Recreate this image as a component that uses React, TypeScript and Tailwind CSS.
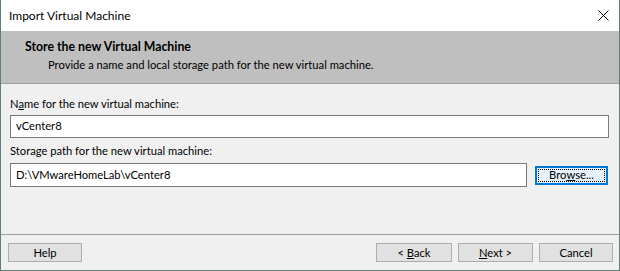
const font = { fontFamily: 'Lato, "Noto Sans", sans-serif' };

const DlgButton = ({ children, className = "" }: { children: React.ReactNode; className?: string }) => (
  <button
    className={
      "h-[19px] w-[74px] border border-[#adadad] bg-[#e1e1e1] text-[11.2px] leading-none text-black " +
      className
    }
  >
    {children}
  </button>
);

export default function App() {
  return (
    <div
      className="flex h-[271px] w-[620px] flex-col border-x border-b border-[#62807a] bg-[#f0f0f0] text-[11.2px] text-black"
      style={font}
    >
      {/* Title bar */}
      <div className="flex h-[31px] items-center justify-between bg-white pl-[8px] pr-[10px]">
        <span className="text-[12px]">Import Virtual Machine</span>
        <svg width="11" height="11" viewBox="0 0 11 11" className="mt-[-1px]">
          <path d="M0.5 0.5 L10.5 10.5 M10.5 0.5 L0.5 10.5" stroke="#000" strokeWidth="1" />
        </svg>
      </div>

      {/* Header */}
      <div className="flex h-[53px] flex-col border-b border-[#a0a0a0] bg-[#bfbfbf] pt-[8px]">
        <div className="pl-6 text-[12.3px] font-bold leading-4">Store the new Virtual Machine</div>
        <div className="mt-[2px] pl-[47px] leading-4">
          Provide a name and local storage path for the new virtual machine.
        </div>
      </div>

      {/* Body */}
      <div className="flex flex-1 flex-col pl-[9px] pr-[10px] pt-[12px]">
        <label className="leading-4">
          N<span className="underline">a</span>me for the new virtual machine:
        </label>
        <div className="mt-[3px] flex h-[23px] items-center border border-[#7a7a7a] bg-white px-[5px]">
          vCenter8
        </div>
        <label className="mt-[5px] leading-4">Storage path for the new virtual machine:</label>
        <div className="mt-[4px] flex items-center gap-2">
          <div className="flex h-[24px] flex-1 items-center border border-[#7a7a7a] bg-white px-[5px]">
            D:\VMwareHomeLab\vCenter8
          </div>
          <button className="mr-[1px] flex h-[19px] w-[73px] items-center justify-center border-2 border-[#0078d7] bg-[#e5f1fb] p-[1px] text-[11.2px]">
            <span className="flex h-full w-full items-center justify-center border border-dotted border-black">
              Bro<span className="underline">w</span>se...
            </span>
          </button>
        </div>
      </div>

      {/* Footer */}
      <div className="flex h-[36px] items-start justify-between border-t border-[#a0a0a0] pl-[7px] pr-[6px] pt-[8px]">
        <DlgButton>Help</DlgButton>
        <div className="flex gap-[6px]">
          <DlgButton className="w-[76px]">
            &lt; <span className="underline">B</span>ack
          </DlgButton>
          <DlgButton className="w-[75px]">
            <span className="underline">N</span>ext &gt;
          </DlgButton>
          <DlgButton>Cancel</DlgButton>
        </div>
      </div>
    </div>
  );
}
